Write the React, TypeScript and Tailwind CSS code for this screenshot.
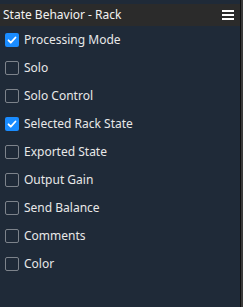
import React, { useState } from 'react';

const items = [
  { label: 'Processing Mode', checked: true },
  { label: 'Solo', checked: false },
  { label: 'Solo Control', checked: false },
  { label: 'Selected Rack State', checked: true },
  { label: 'Exported State', checked: false },
  { label: 'Output Gain', checked: false },
  { label: 'Send Balance', checked: false },
  { label: 'Comments', checked: false },
  { label: 'Color', checked: false },
];

const Check: React.FC<{ checked: boolean; onClick: () => void }> = ({ checked, onClick }) => (
  <button
    onClick={onClick}
    className={`w-[14px] h-[14px] rounded-[2px] flex items-center justify-center shrink-0 ${
      checked ? 'bg-[#1a8cff]' : 'border border-[#7d838b]'
    }`}
  >
    {checked && (
      <svg viewBox="0 0 12 12" className="w-[12px] h-[12px]" fill="none" stroke="white" strokeWidth={1.8}>
        <path d="M2.5 6.3l2.3 2.4 4.7-5.2" strokeLinecap="round" strokeLinejoin="round" />
      </svg>
    )}
  </button>
);

const App: React.FC = () => {
  const [state, setState] = useState(items);

  const toggle = (i: number) => {
    setState(state.map((s, idx) => (idx === i ? { ...s, checked: !s.checked } : s)));
  };

  return (
    <div className="w-[243px] h-[307px] flex bg-[#1f2a38] font-['Noto_Sans',sans-serif] overflow-hidden">
      <div className="w-[240px] flex flex-col">
        <div className="h-[4px] bg-[#1f2a38]" />
        {/* Header */}
        <div className="h-[22px] bg-[#2b2b2b] flex items-center justify-between pl-[3px] pr-[6px]">
          <span className="text-[12px] text-[#f2f2f2] leading-none">State Behavior - Rack</span>
          <div className="flex flex-col gap-[2px]">
            <div className="w-[12px] h-[2px] bg-white" />
            <div className="w-[12px] h-[2px] bg-white" />
            <div className="w-[12px] h-[2px] bg-white" />
          </div>
        </div>
        {/* List */}
        <ul className="flex flex-col">
          {state.map((item, i) => (
            <li key={item.label} className="h-[28px] flex items-center gap-[5px] pl-[5px]">
              <Check checked={item.checked} onClick={() => toggle(i)} />
              <span className="text-[12px] text-[#e8e8e8] leading-none">{item.label}</span>
            </li>
          ))}
        </ul>
      </div>
      {/* Splitter edge */}
      <div className="w-[1px] bg-[#101010]" />
      <div className="w-[2px] bg-[#3a3a3a]" />
    </div>
  );
};

export default App;
